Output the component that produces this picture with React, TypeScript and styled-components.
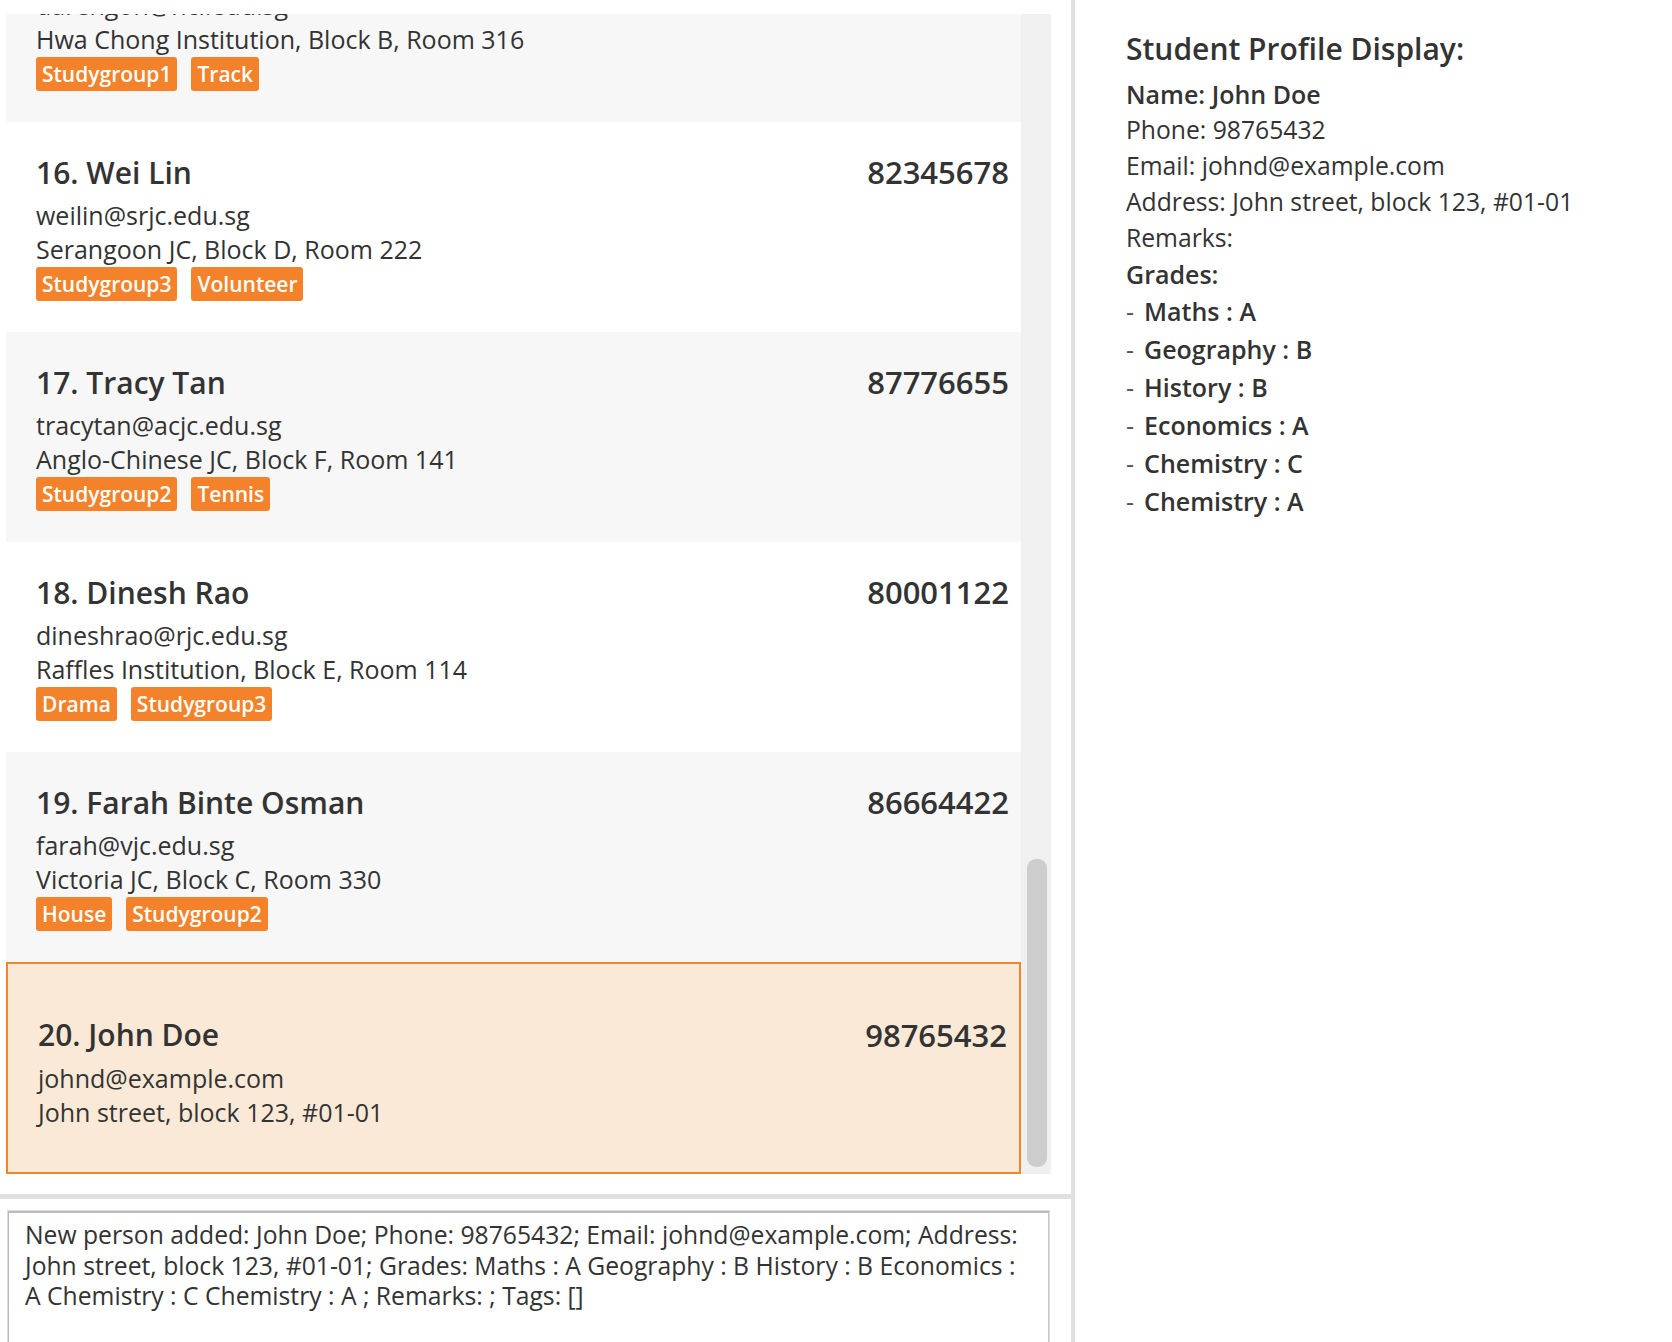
import React from "react";
import styled, { createGlobalStyle } from "styled-components";

const GlobalStyle = createGlobalStyle`
  html, body {
    margin: 0;
    padding: 0;
    background: #ffffff;
  }
  body {
    font-family: "Open Sans", "Noto Sans", sans-serif;
    color: #333333;
  }
`;

type Person = {
  id: number;
  name: string;
  phone: string;
  email: string;
  address: string;
  tags: string[];
};

const people: Person[] = [
  {
    id: 15,
    name: "Daren Goh",
    phone: "91234567",
    email: "darengoh@hci.edu.sg",
    address: "Hwa Chong Institution, Block B, Room 316",
    tags: ["Studygroup1", "Track"],
  },
  {
    id: 16,
    name: "Wei Lin",
    phone: "82345678",
    email: "weilin@srjc.edu.sg",
    address: "Serangoon JC, Block D, Room 222",
    tags: ["Studygroup3", "Volunteer"],
  },
  {
    id: 17,
    name: "Tracy Tan",
    phone: "87776655",
    email: "tracytan@acjc.edu.sg",
    address: "Anglo-Chinese JC, Block F, Room 141",
    tags: ["Studygroup2", "Tennis"],
  },
  {
    id: 18,
    name: "Dinesh Rao",
    phone: "80001122",
    email: "dineshrao@rjc.edu.sg",
    address: "Raffles Institution, Block E, Room 114",
    tags: ["Drama", "Studygroup3"],
  },
  {
    id: 19,
    name: "Farah Binte Osman",
    phone: "86664422",
    email: "farah@vjc.edu.sg",
    address: "Victoria JC, Block C, Room 330",
    tags: ["House", "Studygroup2"],
  },
  {
    id: 20,
    name: "John Doe",
    phone: "98765432",
    email: "johnd@example.com",
    address: "John street, block 123, #01-01",
    tags: [],
  },
];

const grades = [
  ["Maths", "A"],
  ["Geography", "B"],
  ["History", "B"],
  ["Economics", "A"],
  ["Chemistry", "C"],
  ["Chemistry", "A"],
];

const resultLines = [
  "New person added: John Doe; Phone: 98765432; Email: johnd@example.com; Address:",
  "John street, block 123, #01-01; Grades: Maths : A Geography : B History : B Economics :",
  "A Chemistry : C Chemistry : A ; Remarks: ; Tags: []",
];

const Window = styled.div`
  display: grid;
  grid-template-columns: 1071px 4px 1fr;
  height: 1342px;
  overflow: hidden;
`;

const LeftPane = styled.div`
  display: flex;
  flex-direction: column;
  min-height: 0;
`;

const ListArea = styled.div`
  display: flex;
  flex-shrink: 0;
  height: 1160px;
  margin: 14px 20px 0 6px;
`;

const Viewport = styled.div`
  flex: 1;
  display: flex;
  flex-direction: column;
  justify-content: flex-end;
  overflow: hidden;
`;

const Card = styled.div<{ $tone: "plain" | "alt" | "selected" }>`
  flex-shrink: 0;
  box-sizing: border-box;
  height: ${(p) => (p.$tone === "selected" ? "212px" : "210px")};
  padding: ${(p) => (p.$tone === "selected" ? "6px 12px 0 30px" : "0 12px 2px 30px")};
  display: flex;
  flex-direction: column;
  justify-content: center;
  background: ${(p) =>
    p.$tone === "selected" ? "#fbe9d7" : p.$tone === "alt" ? "#f7f7f7" : "#ffffff"};
  border: ${(p) => (p.$tone === "selected" ? "2px solid #f0852a" : "none")};
`;

const CardHeader = styled.div`
  display: flex;
  justify-content: space-between;
  align-items: center;
  height: 42px;
  margin-bottom: 5px;
  font-weight: 600;
  color: #333333;
`;

const Name = styled.span`
  font-size: 30px;
`;

const Phone = styled.span`
  font-size: 31px;
`;

const DetailLine = styled.div`
  font-size: 25px;
  line-height: 34px;
  white-space: nowrap;
`;

const TagRow = styled.div`
  display: flex;
  gap: 14px;
  height: 34px;
  margin-top: 1px;
`;

const Tag = styled.span`
  display: inline-block;
  height: 34px;
  line-height: 34px;
  padding: 0 6px;
  border-radius: 3px;
  background: #f3822a;
  color: #ffffff;
  font-size: 21px;
  font-weight: 600;
`;

const ScrollTrack = styled.div`
  width: 30px;
  box-sizing: border-box;
  background: #f0f0f0;
  display: flex;
  flex-direction: column;
  justify-content: flex-end;
  padding: 0 4px 7px 6px;
`;

const ScrollThumb = styled.div`
  height: 308px;
  border-radius: 9px;
  background: #cdcdcd;
`;

const HDivider = styled.div`
  flex-shrink: 0;
  height: 5px;
  margin-top: 20px;
  background: #e0e0e0;
`;

const ResultBox = styled.div`
  flex-shrink: 0;
  box-sizing: border-box;
  width: 1043px;
  height: 180px;
  margin: 11px 0 0 7px;
  padding: 9px 17px;
  border: 1px solid #dcdcdc;
  border-bottom: none;
  box-shadow: inset 1px 2px 0 #bababa, inset -1px 0 0 #c6c6c6;
  font-size: 24.7px;
  line-height: 30.5px;
`;

const ResultLine = styled.div`
  white-space: nowrap;
`;

const VDivider = styled.div`
  background: #e0e0e0;
`;

const ProfilePane = styled.div`
  padding: 27px 0 0 51px;
`;

const ProfileTitle = styled.div`
  font-size: 30px;
  font-weight: 600;
  line-height: 44px;
  margin-bottom: 5px;
`;

const ProfileLine = styled.div<{ $strong?: boolean }>`
  font-size: ${(p) => (p.$strong ? "25px" : "24.7px")};
  font-weight: ${(p) => (p.$strong ? 600 : 400)};
  line-height: 36px;
  white-space: nowrap;
`;

const GradeItem = styled.div`
  font-size: 25px;
  font-weight: 600;
  line-height: 38px;
`;

const Dash = styled.span`
  font-weight: 400;
  color: #555555;
  margin-right: 10px;
`;

const PersonCard = ({ person, index, selected }: { person: Person; index: number; selected: boolean }) => {
  const tone = selected ? "selected" : index % 2 === 1 ? "alt" : "plain";
  return (
    <Card $tone={tone}>
      <CardHeader>
        <Name>
          {index}. {person.name}
        </Name>
        <Phone>{person.phone}</Phone>
      </CardHeader>
      <DetailLine>{person.email}</DetailLine>
      <DetailLine>{person.address}</DetailLine>
      {person.tags.length > 0 && (
        <TagRow>
          {person.tags.map((t) => (
            <Tag key={t}>{t}</Tag>
          ))}
        </TagRow>
      )}
    </Card>
  );
};

export default function App() {
  return (
    <>
      <GlobalStyle />
      <Window>
        <LeftPane>
          <ListArea>
            <Viewport>
              {people.map((p) => (
                <PersonCard key={p.id} person={p} index={p.id} selected={p.id === 20} />
              ))}
            </Viewport>
            <ScrollTrack>
              <ScrollThumb />
            </ScrollTrack>
          </ListArea>
          <HDivider />
          <ResultBox>
            {resultLines.map((l) => (
              <ResultLine key={l}>{l}</ResultLine>
            ))}
          </ResultBox>
        </LeftPane>
        <VDivider />
        <ProfilePane>
          <ProfileTitle>Student Profile Display:</ProfileTitle>
          <ProfileLine $strong>Name: John Doe</ProfileLine>
          <ProfileLine>Phone: 98765432</ProfileLine>
          <ProfileLine>Email: johnd@example.com</ProfileLine>
          <ProfileLine>Address: John street, block 123, #01-01</ProfileLine>
          <ProfileLine>Remarks:</ProfileLine>
          <ProfileLine $strong>Grades:</ProfileLine>
          {grades.map(([subject, grade], i) => (
            <GradeItem key={i}>
              <Dash>-</Dash>
              {subject} : {grade}
            </GradeItem>
          ))}
        </ProfilePane>
      </Window>
    </>
  );
}
